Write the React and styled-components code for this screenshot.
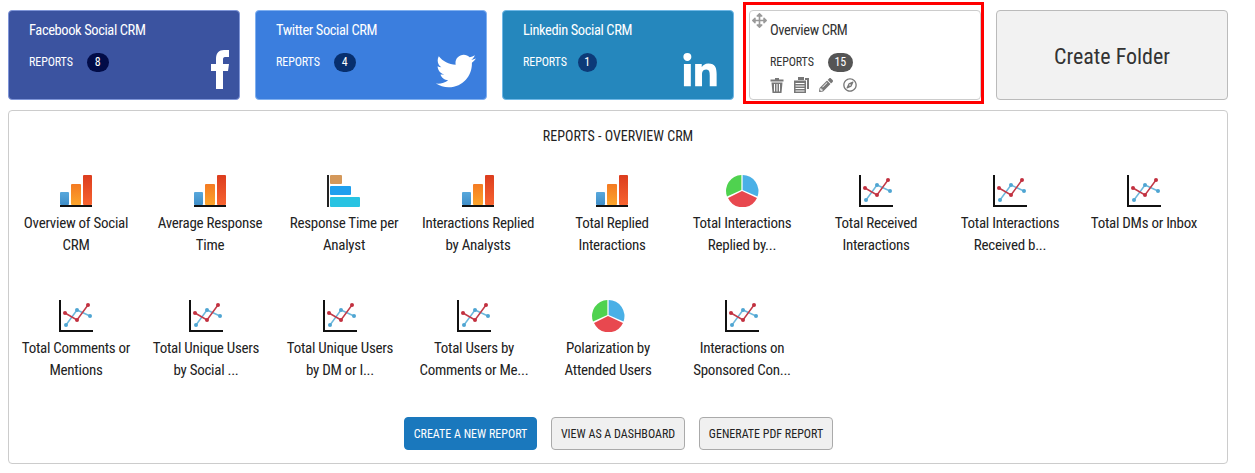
import React from "react";
import styled, { createGlobalStyle } from "styled-components";
import { FaTwitter, FaLinkedinIn, FaPencilAlt, FaRegCompass, FaArrowsAlt } from "react-icons/fa";

const Global = createGlobalStyle`
  html, body { margin: 0; padding: 0; background: #fff; }
  body { font-family: "Liberation Sans Narrow", "Roboto Condensed", Roboto, sans-serif; color: #222; }
`;
const Page = styled.div`
  width: 1255px; height: 473px; box-sizing: border-box; padding: 10px 27px 0 8px; overflow: hidden;
`;
const CardRow = styled.div`display: flex; gap: 15px; height: 90px;`;
const Card = styled.div`
  position: relative; width: 232px; height: 90px; box-sizing: border-box; border-radius: 4px;
  border: 1px solid ${p => p.$border}; background: ${p => p.$bg}; color: ${p => p.$fg || "#fff"};
  padding: 11px 20px 0;
`;
const CardTitle = styled.div`font-size: 14.5px; letter-spacing: -.4px; line-height: 18px;`;
const Stats = styled.div`display: flex; align-items: center; margin-top: 12px; height: 20px; font-size: 12px; letter-spacing: -.1px;`;
const Badge = styled.span`
  margin-left: ${p => p.$gap}px; min-width: ${p => p.$w}px; height: 19px; border-radius: 10px; background: ${p => p.$bg};
  color: #fff; font-size: 12px; display: inline-flex; align-items: center; justify-content: center;
`;
const BrandIcon = styled.span`
  position: absolute; right: ${p => p.$right}px; bottom: ${p => p.$bottom}px; color: #fff; display: flex;
  font-size: ${p => p.$size}px;
`;
const Selected = styled.div`
  position: relative; height: 90px;
  &::after {
    content: ""; position: absolute; top: -8px; left: -6px; right: -3px; bottom: -4px;
    border: 3px solid #f00; pointer-events: none;
  }
`;
const MoveHandle = styled.span`position: absolute; left: 2px; top: 2px; color: #999; font-size: 15px; display: flex;`;
const Actions = styled.div`display: flex; gap: 10px; margin-top: 5px; color: #777; font-size: 14px; align-items: center;`;
const CreateFolder = styled.button`
  width: 232px; height: 90px; background: #f2f2f2; border: 1px solid #bbb; border-radius: 4px;
  font-family: inherit; font-size: 22px; color: #333; padding: 2px 0 0;
`;
const Panel = styled.div`
  margin-top: 10px; height: 354px; box-sizing: border-box; border: 1px solid #ccc; border-radius: 4px; padding-top: 16px;
`;
const PanelTitle = styled.div`text-align: center; font-size: 14px; line-height: 18px; color: #222; margin-bottom: 30px;`;
const ReportRow = styled.div`display: flex; height: 125px;`;
const Report = styled.div`
  width: 134px; flex: none; margin-left: ${p => p.$shift || 0}px; text-align: center;
  font-size: 15px; letter-spacing: -.27px; line-height: 22px; color: #222;
`;
const ReportIcon = styled.div`height: 32px; margin-bottom: 5px; display: flex; justify-content: center;`;
const ReportLabel = styled.div`width: 118px; margin: 0 auto;`;
const ButtonRow = styled.div`display: flex; justify-content: center; gap: 14px; margin-top: -8px; padding-left: 1px;`;
const Btn = styled.button`
  width: ${p => p.$w}px; height: 33px; border-radius: 4px; padding: 0; font-family: inherit; font-size: 12px;
  border: 1px solid ${p => p.$primary ? "#1a78bd" : "#aaa"};
  background: ${p => p.$primary ? "#1a78bd" : "#f0f0f0"};
  color: ${p => p.$primary ? "#fff" : "#222"};
`;

const FacebookF = () => (
  <svg width="18" height="39" viewBox="0 0 18 39" fill="#fff">
    <path d="M5 39V21H0V14H5V9C5 3 8 0 13 0H18V7H14C12.500 7 12 8 12 9.500V14H18L17 21H12V39Z"/>
  </svg>
);
const Trash = () => (
  <svg width="14" height="15" viewBox="0 0 14 15" fill="#777">
    <path d="M5 0H9V1.500H13.500V3.500H.5V1.500H5Z"/>
    <path d="M1.500 4.500H12.500L11.500 15H2.500ZM4 6V13.500H5V6ZM6.500 6V13.500H7.500V6ZM9 6V13.500H10V6Z" fillRule="evenodd"/>
  </svg>
);
const Papers = () => (
  <svg width="15" height="16" viewBox="0 0 15 16" fill="#777">
    <path d="M4 0H10V3H4Z"/>
    <path d="M11 1H15V12H13V3H11Z"/>
    <path d="M0 3.500H12V16H0ZM1.500 6V7H10.500V6ZM1.500 8.500V9.500H10.500V8.500ZM1.500 11V12H10.500V11ZM1.500 13.500V14.500H10.500V13.500Z" fillRule="evenodd"/>
  </svg>
);

const Bars = () => (
  <svg width="34" height="32" viewBox="0 0 34 32">
    <defs>
      <linearGradient id="b1" x1="0" y1="0" x2="0" y2="1"><stop offset="0" stopColor="#58a8dc"/><stop offset="1" stopColor="#3f8ec8"/></linearGradient>
      <linearGradient id="b2" x1="0" y1="0" x2="0" y2="1"><stop offset="0" stopColor="#f47a22"/><stop offset="1" stopColor="#fca52c"/></linearGradient>
      <linearGradient id="b3" x1="0" y1="0" x2="0" y2="1"><stop offset="0" stopColor="#dc3d1e"/><stop offset="1" stopColor="#f76430"/></linearGradient>
    </defs>
    <rect x="1" y="17" width="9" height="13" rx="1" fill="url(#b1)"/>
    <rect x="12" y="9" width="10" height="21" rx="1" fill="url(#b2)"/>
    <rect x="24" y="0" width="9" height="30" rx="1" fill="url(#b3)"/>
    <rect x="1" y="30" width="32" height="2" fill="#111"/>
  </svg>
);
const HBars = () => (
  <svg width="34" height="32" viewBox="0 0 34 32">
    <rect x="0" y="0" width="2" height="32" fill="#222"/>
    <rect x="3" y="0" width="12" height="9" rx="1" fill="#d4985a"/>
    <rect x="3" y="11" width="21" height="9" rx="1" fill="#1f9fee"/>
    <rect x="3" y="22" width="30" height="10" rx="1" fill="#28c3e2"/>
  </svg>
);
const Pie = () => (
  <svg width="34" height="32" viewBox="0 0 34 32">
    <path d="M17.600 0A16 16 0 0 1 32.500 21.500L17.600 15Z" fill="#4ab0e6"/>
    <path d="M32 23A16 16 0 0 1 3 23L17 16Z" fill="#e8484f"/>
    <path d="M2 21.500A16 16 0 0 1 16.400 0L16.400 15Z" fill="#4fd24f"/>
  </svg>
);
const Lines = () => (
  <svg width="34" height="32" viewBox="0 0 34 32">
    <path d="M1 0V31H34" fill="none" stroke="#111" strokeWidth="2"/>
    <polyline points="7,25 18,10 31,16" fill="none" stroke="#6db8dc" strokeWidth="1.500"/>
    <polyline points="6,13 18,20 29,5" fill="none" stroke="#c23a48" strokeWidth="1.500"/>
    <g fill="#4fa5d2"><circle cx="7" cy="25" r="2"/><circle cx="18" cy="10" r="2"/><circle cx="31" cy="16" r="2"/></g>
    <g fill="#c2303f"><circle cx="6" cy="13" r="2"/><circle cx="18" cy="20" r="2"/><circle cx="29" cy="5" r="2"/></g>
  </svg>
);
const Icons = { bars: Bars, hbars: HBars, pie: Pie, lines: Lines };

const rows = [
  [
    ["bars", "Overview of Social CRM"], ["bars", "Average Response Time"], ["hbars", "Response Time per Analyst"],
    ["bars", "Interactions Replied by Analysts"], ["bars", "Total Replied Interactions"],
    ["pie", "Total Interactions Replied by...", -4], ["lines", "Total Received Interactions"],
    ["lines", "Total Interactions Received b..."], ["lines", "Total DMs or Inbox"],
  ],
  [
    ["lines", "Total Comments or Mentions"], ["lines", "Total Unique Users by Social ...", -4],
    ["lines", "Total Unique Users by DM or I..."], ["lines", "Total Users by Comments or Me..."],
    ["pie", "Polarization by Attended Users"], ["lines", "Interactions on Sponsored Con..."],
  ],
];

const socials = [
  { title: "Facebook Social CRM", bg: "#3b53a0", border: "#7f95d8", count: 8, badge: "#020c47", gap: 14, w: 22, Icon: FacebookF, size: 40, right: 10, bottom: 10 },
  { title: "Twitter Social CRM", bg: "#3b7ede", border: "#80b0f0", count: 4, badge: "#072f6e", gap: 14, w: 22, Icon: FaTwitter, size: 40, right: 10, bottom: 8 },
  { title: "Linkedin Social CRM", bg: "#2587bd", border: "#70b8e6", count: 1, badge: "#0c3a78", gap: 11, w: 19, Icon: FaLinkedinIn, size: 38, right: 14, bottom: 8 },
];

export default function App() {
  return (
    <Page>
      <Global />
      <CardRow>
        {socials.map(s => (
          <Card key={s.title} $bg={s.bg} $border={s.border}>
            <CardTitle>{s.title}</CardTitle>
            <Stats>REPORTS<Badge $gap={s.gap} $w={s.w} $bg={s.badge}>{s.count}</Badge></Stats>
            <BrandIcon $size={s.size} $right={s.right} $bottom={s.bottom}><s.Icon /></BrandIcon>
          </Card>
        ))}
        <Selected>
          <Card $bg="#fff" $border="#ccc" $fg="#333">
            <MoveHandle><FaArrowsAlt /></MoveHandle>
            <CardTitle>Overview CRM</CardTitle>
            <Stats>REPORTS<Badge $gap={14} $w={25} $bg="#555">15</Badge></Stats>
            <Actions><Trash /><Papers /><FaPencilAlt /><FaRegCompass /></Actions>
          </Card>
        </Selected>
        <CreateFolder>Create Folder</CreateFolder>
      </CardRow>
      <Panel>
        <PanelTitle>REPORTS - OVERVIEW CRM</PanelTitle>
        {rows.map((row, i) => (
          <ReportRow key={i}>
            {row.map(([icon, label, shift]) => {
              const I = Icons[icon];
              return (
                <Report key={label} $shift={shift}>
                  <ReportIcon><I /></ReportIcon>
                  <ReportLabel>{label}</ReportLabel>
                </Report>
              );
            })}
          </ReportRow>
        ))}
        <ButtonRow>
          <Btn $primary $w={133}>CREATE A NEW REPORT</Btn>
          <Btn $w={134}>VIEW AS A DASHBOARD</Btn>
          <Btn $w={134}>GENERATE PDF REPORT</Btn>
        </ButtonRow>
      </Panel>
    </Page>
  );
}
